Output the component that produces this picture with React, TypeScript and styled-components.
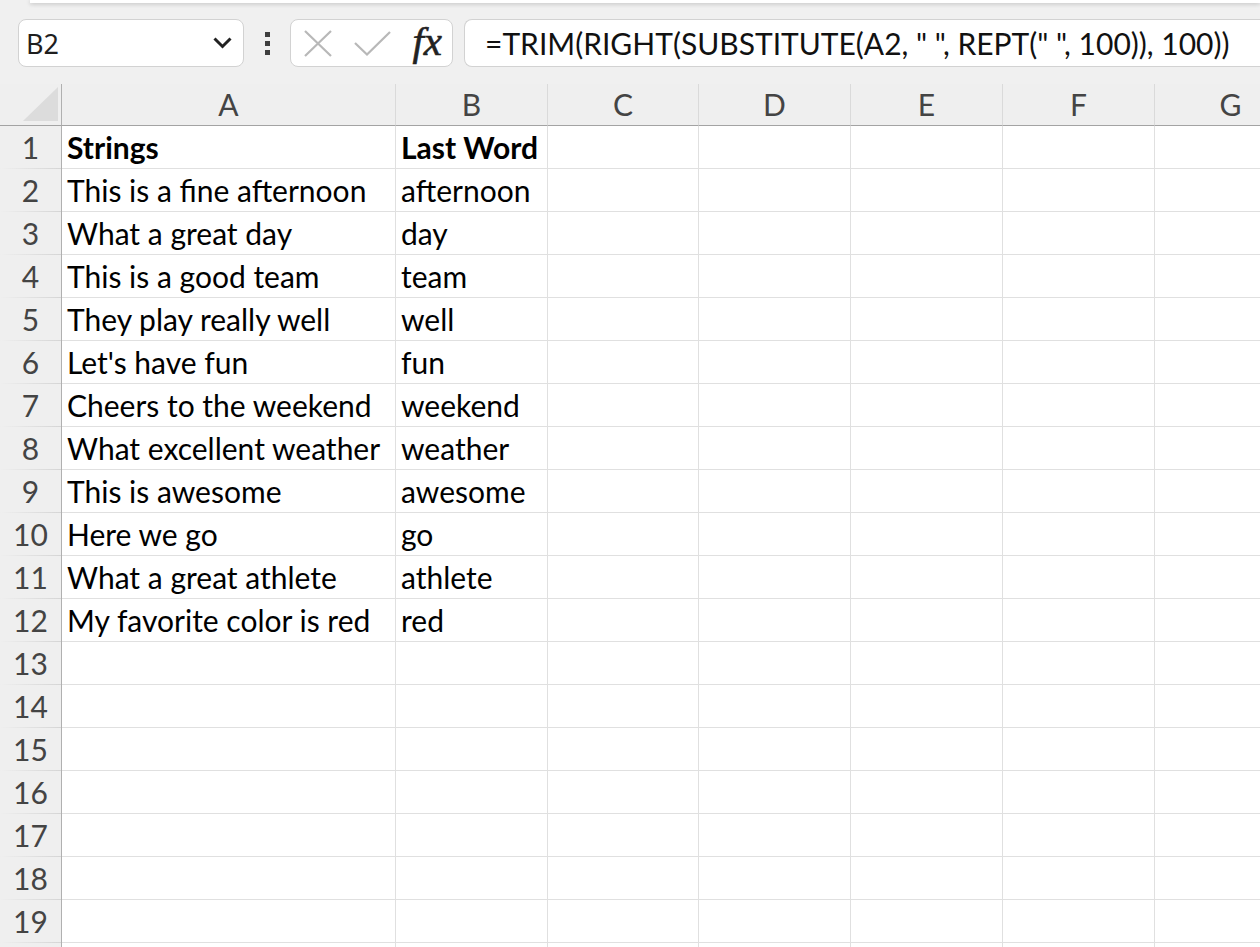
import * as React from 'react';
import styled, { createGlobalStyle } from 'styled-components';

const GlobalStyle = createGlobalStyle`
  html, body {
    margin: 0;
    padding: 0;
    background: #f0f0f0;
    overflow: hidden;
  }
`;

const Window = styled.div`
  width: 1260px;
  height: 947px;
  overflow: hidden;
  background: #f0f0f0;
  display: flex;
  flex-direction: column;
`;

const RibbonEdge = styled.div`
  height: 3px;
  margin-left: 30px;
  background: #fff;
  box-shadow: 0 1px 4px rgba(0, 0, 0, 0.22);
`;

const FormulaBar = styled.div`
  display: flex;
  align-items: stretch;
  height: 48px;
  padding: 16px 0 17px 18px;
`;

const Box = styled.div`
  box-sizing: border-box;
  background: #fff;
  border: 1px solid #d2d2d2;
  border-radius: 8px;
  display: flex;
  align-items: center;
`;

const NameBox = styled(Box)`
  width: 226px;
  padding: 0 11px 0 7px;
  justify-content: space-between;
  font-family: 'Noto Sans', sans-serif;
  font-size: 27px;
  color: #1e1e1e;
`;

const MoreDots = styled.div`
  width: 46px;
  display: flex;
  flex-direction: column;
  align-items: center;
  justify-content: center;
  gap: 4px;
`;

const Dot = styled.span`
  width: 5px;
  height: 5px;
  background: #3e3e3e;
`;

const EditButtons = styled(Box)`
  width: 163px;
  padding: 0 10px 0 13px;
  justify-content: space-between;
`;

const Fx = styled.span`
  font-family: 'Liberation Serif', serif;
  font-style: italic;
  font-size: 41px;
  line-height: 1;
  color: #222;
  margin-top: -4px;
  -webkit-text-stroke: 0.6px #222;
`;

const FormulaInput = styled(Box)`
  flex: 1;
  margin-left: 11px;
  border-right: none;
  border-radius: 8px 0 0 8px;
  padding-left: 20px;
  font-family: Lato, sans-serif;
  font-size: 30px;
  color: #111;
  white-space: nowrap;
`;

const Sheet = styled.div`
  flex: 1;
  overflow: hidden;
  display: grid;
  grid-template-columns: 62px 334px 152px 151px 152px 152px 152px 152px;
  grid-template-rows: 42px;
  grid-auto-rows: 43px;
  font-family: Lato, sans-serif;
  font-size: 30px;
`;

const Corner = styled.div`
  box-sizing: border-box;
  background: #efefef;
  border-right: 1px solid #b0b0b0;
  border-bottom: 1px solid #a3a3a3;
  display: flex;
  align-items: flex-end;
  justify-content: flex-end;
  padding: 0 3px 4px 0;
`;

const ColHeader = styled.div`
  box-sizing: border-box;
  background: #efefef;
  border-right: 1px solid #dadada;
  border-bottom: 1px solid #a3a3a3;
  text-align: center;
  line-height: 41px;
  color: #444;
`;

const RowHeader = styled.div`
  box-sizing: border-box;
  background: linear-gradient(to right, #efefef, #d5d5d5) bottom / 100% 1px no-repeat, #efefef;
  border-right: 1px solid #b0b0b0;
  text-align: center;
  line-height: 42px;
  color: #444;
`;

const Cell = styled.div<{ $bold?: boolean }>`
  box-sizing: border-box;
  background: #fff;
  border-right: 1px solid #e0e0e0;
  border-bottom: 1px solid #e0e0e0;
  padding: 0 5px;
  line-height: 42px;
  white-space: nowrap;
  color: #000;
  font-weight: ${({ $bold }) => ($bold ? 700 : 400)};
`;

const columns = ['A', 'B', 'C', 'D', 'E', 'F', 'G'];

const data = [
  ['Strings', 'Last Word'],
  ['This is a fine afternoon', 'afternoon'],
  ['What a great day', 'day'],
  ['This is a good team', 'team'],
  ['They play really well', 'well'],
  ["Let's have fun", 'fun'],
  ['Cheers to the weekend', 'weekend'],
  ['What excellent weather', 'weather'],
  ['This is awesome', 'awesome'],
  ['Here we go', 'go'],
  ['What a great athlete', 'athlete'],
  ['My favorite color is red', 'red'],
];

// 19 visible rows, the 20th only peeks in at the bottom edge
const ROWS = 20;

export default function App() {
  return (
    <Window>
      <GlobalStyle />
      <RibbonEdge />
      <FormulaBar>
        <NameBox>
          <span>B2</span>
          <svg width="19" height="12" viewBox="0 0 19 12">
            <polyline points="1.5,1.5 9.5,9.5 17.5,1.5" fill="none" stroke="#222" strokeWidth="3" />
          </svg>
        </NameBox>
        <MoreDots>
          <Dot />
          <Dot />
          <Dot />
        </MoreDots>
        <EditButtons>
          <svg width="28" height="27" viewBox="0 0 28 27">
            <path d="M1 1 L27 26 M27 1 L1 26" stroke="#b8b8b8" strokeWidth="2.2" fill="none" />
          </svg>
          <svg width="37" height="25" viewBox="0 0 37 25">
            <polyline points="1,12 13,23.5 36,1" fill="none" stroke="#b8b8b8" strokeWidth="2.2" />
          </svg>
          <Fx>fx</Fx>
        </EditButtons>
        <FormulaInput>=TRIM(RIGHT(SUBSTITUTE(A2, " ", REPT(" ", 100)), 100))</FormulaInput>
      </FormulaBar>
      <Sheet>
        <Corner>
          <svg width="35" height="34" viewBox="0 0 35 34">
            <polygon points="35,0 35,34 0,34" fill="#dcdcdc" />
          </svg>
        </Corner>
        {columns.map((c) => (
          <ColHeader key={c}>{c}</ColHeader>
        ))}
        {Array.from({ length: ROWS }, (_, r) => (
          <React.Fragment key={r}>
            <RowHeader>{r < 19 ? r + 1 : ''}</RowHeader>
            {columns.map((c, ci) => (
              <Cell key={c} $bold={r === 0}>
                {data[r] && ci < 2 ? data[r][ci] : ''}
              </Cell>
            ))}
          </React.Fragment>
        ))}
      </Sheet>
    </Window>
  );
}
